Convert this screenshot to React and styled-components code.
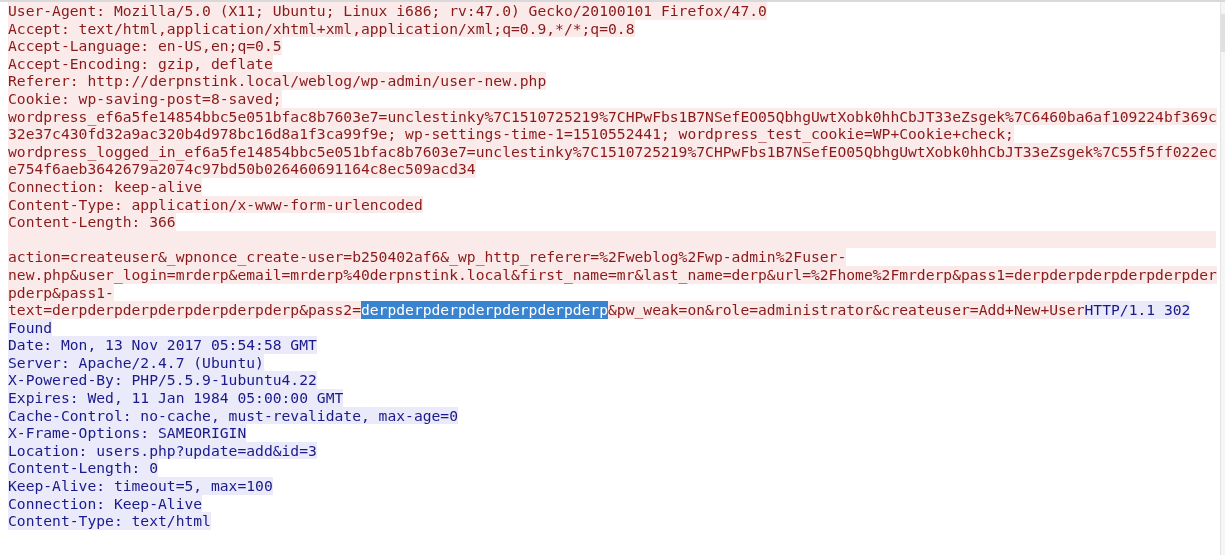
import React from "react";
import styled, { createGlobalStyle } from "styled-components";

const Global = createGlobalStyle`
  html, body { margin: 0; padding: 0; background: #ffffff; }
  body { width: 1225px; height: 555px; overflow: hidden; }
`;

const Window = styled.div`
  width: 1225px;
  height: 555px;
  box-sizing: border-box;
  border-top: 2px solid #d9d9d9;
  display: flex;
  background: #ffffff;
`;

const TextArea = styled.div`
  flex: 1;
  padding: 0 0 0 8px;
  font-family: "DejaVu Sans Mono", "Liberation Mono", monospace;
  font-size: 14.67px;
  filter: blur(0.35px);
  position: relative;
  z-index: 0;
`;

const Line = styled.div`
  height: 17.6px;
  line-height: 17.6px;
  white-space: pre;
`;

const palette = {
  client: { fg: "#8a1a1a", bg: "#fbeaea" },
  server: { fg: "#1a1a8a", bg: "#eaeafb" },
  selected: { fg: "#ffffff", bg: "#3a84cf" },
};

/* the highlight is drawn as a layer under the glyphs so descenders
   (underscores) of one line are not covered by the next line's fill */
const Seg = styled.span`
  position: relative;
  display: inline-block;
  height: 17.6px;
  vertical-align: top;
  color: ${(p) => palette[p.$kind].fg};
  &::before {
    content: "";
    position: absolute;
    inset: 0;
    z-index: -1;
    background: ${(p) => palette[p.$kind].bg};
  }
`;

const BlankFill = styled.div`
  height: 17.6px;
  margin-right: 4px;
  position: relative;
  &::before {
    content: "";
    position: absolute;
    inset: 0;
    z-index: -1;
    background: ${(p) => palette[p.$kind].bg};
  }
`;

const Scrollbar = styled.div`
  width: 4px;
  background: #f5f5f5;
  border-left: 1px solid #e4e4e4;
  display: flex;
  flex-direction: column;
  padding-top: 12px;
`;

const Thumb = styled.div`
  height: 38px;
  background: #e0e0e0;
`;

const C = "client";
const S = "server";
const X = "selected";

const lines = [
  [[C, "User-Agent: Mozilla/5.0 (X11; Ubuntu; Linux i686; rv:47.0) Gecko/20100101 Firefox/47.0"]],
  [[C, "Accept: text/html,application/xhtml+xml,application/xml;q=0.9,*/*;q=0.8"]],
  [[C, "Accept-Language: en-US,en;q=0.5"]],
  [[C, "Accept-Encoding: gzip, deflate"]],
  [[C, "Referer: http://derpnstink.local/weblog/wp-admin/user-new.php"]],
  [[C, "Cookie: wp-saving-post=8-saved;"]],
  [[C, "wordpress_ef6a5fe14854bbc5e051bfac8b7603e7=unclestinky%7C1510725219%7CHPwFbs1B7NSefEO05QbhgUwtXobk0hhCbJT33eZsgek%7C6460ba6af109224bf369c"]],
  [[C, "32e37c430fd32a9ac320b4d978bc16d8a1f3ca99f9e; wp-settings-time-1=1510552441; wordpress_test_cookie=WP+Cookie+check;"]],
  [[C, "wordpress_logged_in_ef6a5fe14854bbc5e051bfac8b7603e7=unclestinky%7C1510725219%7CHPwFbs1B7NSefEO05QbhgUwtXobk0hhCbJT33eZsgek%7C55f5ff022ec"]],
  [[C, "e754f6aeb3642679a2074c97bd50b026460691164c8ec509acd34"]],
  [[C, "Connection: keep-alive"]],
  [[C, "Content-Type: application/x-www-form-urlencoded"]],
  [[C, "Content-Length: 366"]],
  "blank",
  [[C, "action=createuser&_wpnonce_create-user=b250402af6&_wp_http_referer=%2Fweblog%2Fwp-admin%2Fuser-"]],
  [[C, "new.php&user_login=mrderp&email=mrderp%40derpnstink.local&first_name=mr&last_name=derp&url=%2Fhome%2Fmrderp&pass1=derpderpderpderpderpder"]],
  [[C, "pderp&pass1-"]],
  [
    [C, "text=derpderpderpderpderpderpderp&pass2="],
    [X, "derpderpderpderpderpderpderp"],
    [C, "&pw_weak=on&role=administrator&createuser=Add+New+User"],
    [S, "HTTP/1.1 302"],
  ],
  [[S, "Found"]],
  [[S, "Date: Mon, 13 Nov 2017 05:54:58 GMT"]],
  [[S, "Server: Apache/2.4.7 (Ubuntu)"]],
  [[S, "X-Powered-By: PHP/5.5.9-1ubuntu4.22"]],
  [[S, "Expires: Wed, 11 Jan 1984 05:00:00 GMT"]],
  [[S, "Cache-Control: no-cache, must-revalidate, max-age=0"]],
  [[S, "X-Frame-Options: SAMEORIGIN"]],
  [[S, "Location: users.php?update=add&id=3"]],
  [[S, "Content-Length: 0"]],
  [[S, "Keep-Alive: timeout=5, max=100"]],
  [[S, "Connection: Keep-Alive"]],
  [[S, "Content-Type: text/html"]],
];

export default function App() {
  return (
    <>
      <Global />
      <Window>
        <TextArea>
          {lines.map((segs, i) =>
            segs === "blank" ? (
              <BlankFill key={i} $kind={C} />
            ) : (
              <Line key={i}>
                {segs.map(([kind, text], j) => (
                  <Seg key={j} $kind={kind}>
                    {text}
                  </Seg>
                ))}
              </Line>
            )
          )}
        </TextArea>
        <Scrollbar>
          <Thumb />
        </Scrollbar>
      </Window>
    </>
  );
}
